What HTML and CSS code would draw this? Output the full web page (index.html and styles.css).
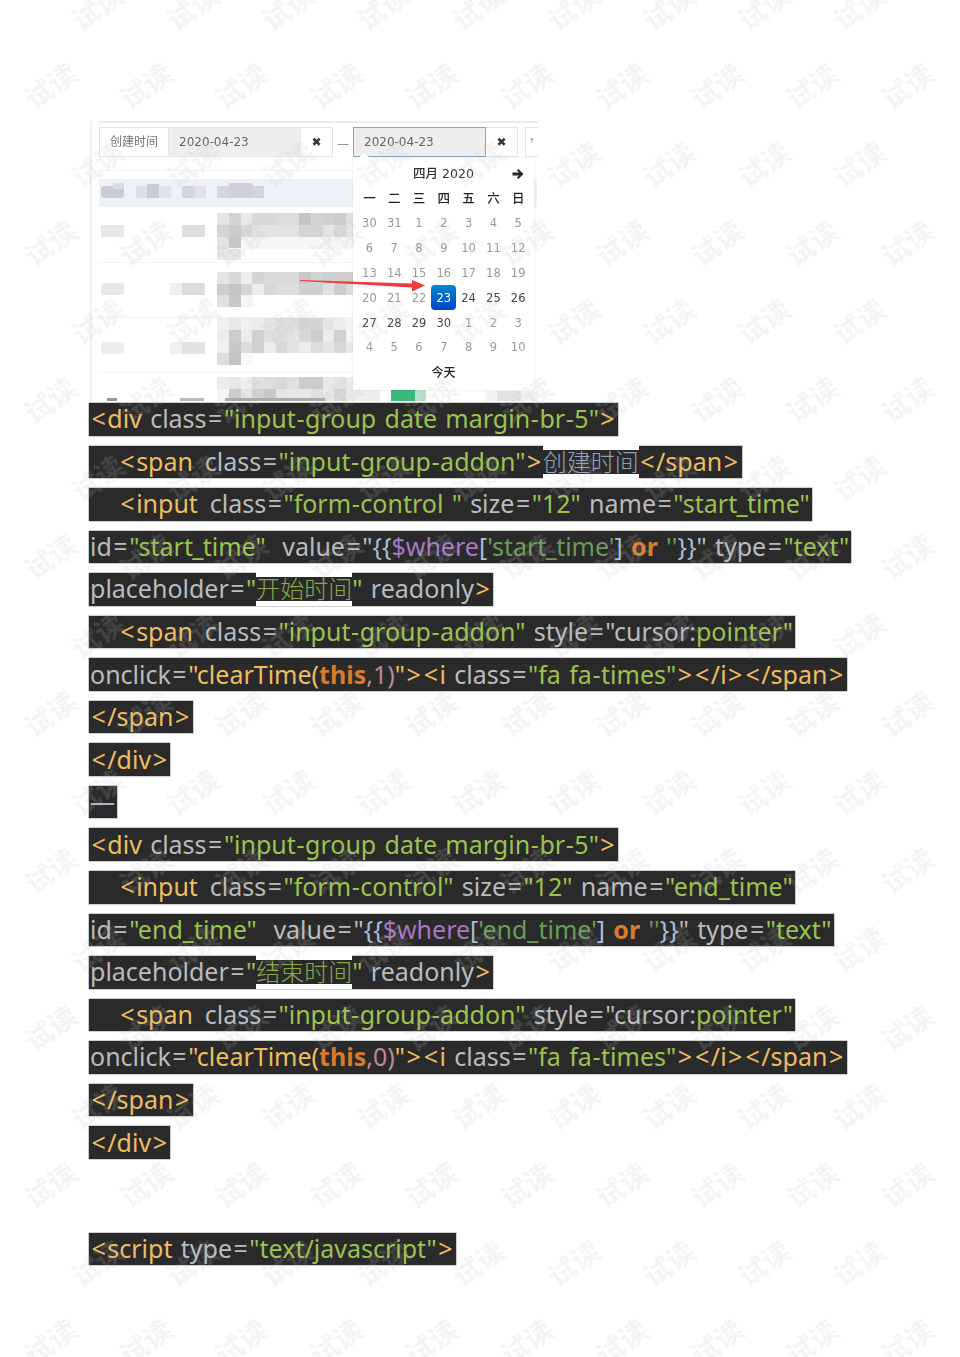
FILE: index.html
```html
<!DOCTYPE html>
<html lang="zh-CN">
<head>
<meta charset="utf-8">
<title>试读</title>
<link rel="stylesheet" href="styles.css">
</head>
<body>
<main class="page">
  <section class="shot">
    <div class="topline"></div>
    <div class="filters">
      <div class="group">
        <span class="addon label">创建时间</span>
        <span class="field">2020-04-23</span>
        <span class="addon clear">✖</span>
      </div>
      <span class="dash">—</span>
      <div class="group">
        <span class="field focus">2020-04-23</span>
        <span class="addon clear">✖</span>
      </div>
      <div class="stub">↑</div>
    </div>
    <svg class="table" viewBox="90 165 447 236" width="447" height="236" aria-hidden="true">
      <rect x="99" y="170" width="255" height="1" fill="#f3f3f3"/>
      <rect x="99" y="262" width="255" height="1" fill="#f4f4f4"/>
      <rect x="99" y="317" width="255" height="1" fill="#f4f4f4"/>
      <rect x="99" y="372" width="255" height="1" fill="#f4f4f4"/>
      <rect x="99" y="179" width="438" height="28" fill="#eef1f5"/>
      <g><rect x="101" y="186" width="23" height="12" rx="3" fill="#c9ccd2"/><rect x="113" y="183" width="11" height="6" fill="#d8dbe0"/><rect x="136" y="186" width="12" height="12" fill="#dcdfe4"/><rect x="147" y="184" width="12" height="14" fill="#c9ccd2"/><rect x="159" y="186" width="12" height="12" fill="#e0e3e8"/><rect x="182" y="186" width="12" height="12" fill="#d2d5da"/><rect x="194" y="186" width="12" height="12" fill="#dfe1e6"/><rect x="217" y="186" width="47" height="12" fill="#d4d6dc"/><rect x="229" y="183" width="24" height="15" fill="#cfd1d7"/></g>
      <g class="left"><rect x="101" y="225" width="23" height="12" fill="#e8e8e8"/><rect x="182" y="225" width="23" height="12" fill="#dedede"/><rect x="101" y="283" width="23" height="12" rx="3" fill="#e8e8e8"/><rect x="170" y="283" width="12" height="12" fill="#f0f0f0"/><rect x="182" y="283" width="23" height="12" fill="#dcdcdc"/><rect x="101" y="342" width="23" height="12" rx="3" fill="#ececec"/><rect x="170" y="342" width="12" height="12" fill="#f0f0f0"/><rect x="182" y="342" width="23" height="12" fill="#e2e2e2"/></g>
      <g>
        <rect x="217" y="213" width="12" height="12" fill="#e4e4e4"/><rect x="229" y="213" width="12" height="12" fill="#d4d4d4"/><rect x="241" y="213" width="12" height="12" fill="#e8e8e8"/><rect x="252" y="213" width="24" height="12" fill="#d8d8d8"/><rect x="276" y="213" width="23" height="12" fill="#dcdcdc"/><rect x="299" y="213" width="12" height="12" fill="#c4c4c4"/><rect x="311" y="213" width="12" height="12" fill="#d4d4d4"/><rect x="323" y="213" width="12" height="12" fill="#d0d0d0"/><rect x="334" y="213" width="12" height="12" fill="#cccccc"/><rect x="346" y="213" width="11" height="12" fill="#e0e0e0"/>
        <rect x="217" y="225" width="12" height="12" fill="#d4d4d4"/><rect x="229" y="225" width="12" height="12" fill="#cccccc"/><rect x="241" y="225" width="12" height="12" fill="#d8d8d8"/><rect x="252" y="225" width="24" height="12" fill="#e2e2e2"/><rect x="276" y="225" width="23" height="12" fill="#e2e2e2"/><rect x="299" y="225" width="24" height="12" fill="#d4d4d4"/><rect x="323" y="225" width="12" height="12" fill="#e4e4e4"/><rect x="334" y="225" width="12" height="12" fill="#d8d8d8"/><rect x="346" y="225" width="11" height="12" fill="#e8e8e8"/>
        <rect x="217" y="237" width="12" height="12" fill="#e4e4e4"/><rect x="229" y="237" width="12" height="11" fill="#c8c8c8"/><rect x="241" y="237" width="116" height="12" fill="#f6f6f6"/>
        <rect x="217" y="249" width="24" height="11" fill="#e8e8e8"/>
        <rect x="217" y="272" width="12" height="12" fill="#e4e4e4"/><rect x="229" y="272" width="12" height="12" fill="#d8d8d8"/><rect x="241" y="272" width="12" height="12" fill="#ececec"/><rect x="252" y="272" width="12" height="12" fill="#d4d4d4"/><rect x="264" y="272" width="35" height="12" fill="#dadada"/><rect x="299" y="272" width="12" height="12" fill="#c8c8c8"/><rect x="311" y="272" width="12" height="12" fill="#d4d4d4"/><rect x="323" y="272" width="34" height="12" fill="#cfcfcf"/>
        <rect x="217" y="284" width="12" height="11" fill="#cccccc"/><rect x="229" y="284" width="12" height="11" fill="#c4c4c4"/><rect x="241" y="284" width="12" height="11" fill="#d4d4d4"/><rect x="252" y="284" width="12" height="11" fill="#ececec"/><rect x="264" y="284" width="12" height="11" fill="#d8d8d8"/><rect x="276" y="284" width="23" height="11" fill="#dedede"/><rect x="299" y="284" width="24" height="11" fill="#d0d0d0"/><rect x="323" y="284" width="12" height="11" fill="#e0e0e0"/><rect x="334" y="284" width="12" height="11" fill="#cccccc"/><rect x="346" y="284" width="11" height="11" fill="#dcdcdc"/>
        <rect x="217" y="295" width="12" height="12" fill="#e0e0e0"/><rect x="229" y="295" width="12" height="12" fill="#c8c8c8"/><rect x="241" y="295" width="12" height="12" fill="#f4f4f4"/>
        <rect x="217" y="318" width="12" height="12" fill="#f0f0f0"/><rect x="229" y="318" width="12" height="12" fill="#e8e8e8"/><rect x="241" y="318" width="12" height="12" fill="#f0f0f0"/><rect x="252" y="318" width="12" height="12" fill="#ececec"/><rect x="264" y="318" width="12" height="12" fill="#e4e4e4"/><rect x="276" y="318" width="23" height="12" fill="#dedede"/><rect x="299" y="318" width="24" height="12" fill="#d4d4d4"/><rect x="323" y="318" width="12" height="12" fill="#e4e4e4"/><rect x="334" y="318" width="12" height="12" fill="#ececec"/><rect x="346" y="318" width="11" height="12" fill="#f4f4f4"/>
        <rect x="217" y="330" width="12" height="12" fill="#ececec"/><rect x="229" y="330" width="12" height="12" fill="#cccccc"/><rect x="241" y="330" width="12" height="12" fill="#ececec"/><rect x="252" y="330" width="12" height="12" fill="#d0d0d0"/><rect x="264" y="330" width="23" height="12" fill="#e0e0e0"/><rect x="287" y="330" width="12" height="12" fill="#e4e4e4"/><rect x="299" y="330" width="12" height="12" fill="#d8d8d8"/><rect x="311" y="330" width="12" height="12" fill="#cccccc"/><rect x="323" y="330" width="12" height="12" fill="#ececec"/><rect x="334" y="330" width="12" height="12" fill="#d0d0d0"/><rect x="346" y="330" width="11" height="12" fill="#f4f4f4"/>
        <rect x="217" y="342" width="12" height="11" fill="#f0f0f0"/><rect x="229" y="342" width="12" height="11" fill="#c8c8c8"/><rect x="241" y="342" width="12" height="11" fill="#dcdcdc"/><rect x="252" y="342" width="12" height="11" fill="#d0d0d0"/><rect x="264" y="342" width="12" height="11" fill="#ececec"/><rect x="276" y="342" width="12" height="11" fill="#d8d8d8"/><rect x="287" y="342" width="12" height="11" fill="#e4e4e4"/><rect x="299" y="342" width="12" height="11" fill="#ececec"/><rect x="311" y="342" width="12" height="11" fill="#dcdcdc"/><rect x="323" y="342" width="12" height="11" fill="#e4e4e4"/><rect x="334" y="342" width="12" height="11" fill="#d8d8d8"/><rect x="346" y="342" width="11" height="11" fill="#e8e8e8"/>
        <rect x="217" y="353" width="12" height="12" fill="#dcdcdc"/><rect x="229" y="353" width="12" height="12" fill="#c4c4c4"/><rect x="241" y="353" width="12" height="12" fill="#f8f8f8"/>
        <rect x="217" y="377" width="12" height="12" fill="#ececec"/><rect x="229" y="377" width="12" height="12" fill="#e8e8e8"/><rect x="241" y="377" width="12" height="12" fill="#f0f0f0"/><rect x="252" y="377" width="12" height="12" fill="#e0e0e0"/><rect x="264" y="377" width="12" height="12" fill="#dcdcdc"/><rect x="276" y="377" width="12" height="12" fill="#d8d8d8"/><rect x="287" y="377" width="12" height="12" fill="#e0e0e0"/><rect x="299" y="377" width="24" height="12" fill="#cccccc"/><rect x="323" y="377" width="12" height="12" fill="#e8e8e8"/><rect x="334" y="377" width="12" height="12" fill="#e4e4e4"/><rect x="346" y="377" width="11" height="12" fill="#f0f0f0"/>
        <rect x="217" y="389" width="12" height="12" fill="#f4f4f4"/><rect x="229" y="389" width="12" height="12" fill="#cccccc"/><rect x="241" y="389" width="12" height="12" fill="#e8e8e8"/><rect x="252" y="389" width="12" height="12" fill="#d4d4d4"/><rect x="264" y="389" width="12" height="12" fill="#c8c8c8"/><rect x="276" y="389" width="12" height="12" fill="#e4e4e4"/><rect x="287" y="389" width="24" height="12" fill="#e8e8e8"/><rect x="311" y="389" width="12" height="12" fill="#e0e0e0"/><rect x="323" y="389" width="12" height="12" fill="#e8e8e8"/><rect x="334" y="389" width="12" height="12" fill="#d8d8d8"/><rect x="346" y="389" width="34" height="12" fill="#eeeeee"/>
        <rect x="107" y="398" width="10" height="3" fill="#999999"/><rect x="180" y="398" width="24" height="3" fill="#bbbbbb"/><rect x="225" y="398" width="100" height="3" fill="#aaaaaa"/>
        <rect x="391" y="389" width="24" height="12" fill="#3db97c"/><rect x="415" y="390" width="11" height="11" fill="#b6e3cb"/><rect x="485" y="391" width="12" height="10" fill="#f2f2f2"/><rect x="497" y="391" width="24" height="10" fill="#e4e4e4"/><rect x="521" y="391" width="16" height="10" fill="#f0f0f0"/>
      </g>
    </svg>
    <div class="picker">
      <div class="caption"><span class="title">四月 2020</span><svg class="next" viewBox="0 0 13 10" width="13" height="10" aria-hidden="true"><path d="M0 3.6H6.6L4.4 1.4 5.8 0 11 5 5.8 10 4.4 8.6 6.6 6.4H0Z" transform="translate(1.5 0)" fill="#222"/></svg></div>
      <div class="days">
        <b>一</b><b>二</b><b>三</b><b>四</b><b>五</b><b>六</b><b>日</b>
        <i>30</i><i>31</i><i>1</i><i>2</i><i>3</i><i>4</i><i>5</i>
        <i>6</i><i>7</i><i>8</i><i>9</i><i>10</i><i>11</i><i>12</i>
        <i>13</i><i>14</i><i>15</i><i>16</i><i>17</i><i>18</i><i>19</i>
        <i>20</i><i>21</i><i>22</i><em class="today">23</em><em>24</em><em>25</em><em>26</em>
        <em>27</em><em>28</em><em>29</em><em>30</em><i>1</i><i>2</i><i>3</i>
        <i>4</i><i>5</i><i>6</i><i>7</i><i>8</i><i>9</i><i>10</i>
      </div>
      <div class="now">今天</div>
    </div>
    <svg class="arrow" viewBox="0 0 130 18" width="130" height="18" aria-hidden="true"><polygon points="1,4 113,7.5 113,4 126,9.5 113,15.6 113,11.5 1,5" fill="#f23a3c"/></svg>
  </section>

  <section class="code">
    <div class="line"><span class="bar"><span class="t"><i>&lt;</i>div</span><span class="a"> class<i>=</i></span><span class="s">"input<i class="n">-</i>group date margin<i class="n">-</i>br<i class="n">-</i>5"</span><span class="t"><i>&gt;</i></span></span></div>
    <div class="line"><span class="bar"><span class="t ind">    <i>&lt;</i>span</span><span class="a"> class<i>=</i></span><span class="s">"input<i class="n">-</i>group<i class="n">-</i>addon"</span><span class="t"><i>&gt;</i></span><span class="cjk pale">创建时间</span><span class="t"><i>&lt;</i>/span<i>&gt;</i></span></span></div>
    <div class="line"><span class="bar"><span class="t ind">    <i>&lt;</i>input</span><span class="a"> class<i>=</i></span><span class="s">"form<i class="n">-</i>control "</span><span class="a"> size<i>=</i></span><span class="s">"12"</span><span class="a"> name<i>=</i></span><span class="s">"start<i class="u">_</i>time"</span></span></div>
    <div class="line"><span class="bar"><span class="a">id<i>=</i></span><span class="s">"start<i class="u">_</i>time"</span><span class="a">  value<i>=</i>"</span><span class="b">{{</span><span class="v">$where</span><span class="b">[</span><span class="q">'start<i class="u">_</i>time'</span><span class="b">]</span><span class="k"> or </span><span class="q">''</span><span class="b">}}</span><span class="a">" type<i>=</i></span><span class="s">"text"</span></span></div>
    <div class="line"><span class="bar"><span class="a">placeholder<i>=</i></span><span class="s">"</span><span class="cjk green">开始时间</span><span class="s">"</span><span class="a"> readonly</span><span class="t"><i>&gt;</i></span></span></div>
    <div class="line"><span class="bar"><span class="t ind">    <i>&lt;</i>span</span><span class="a"> class<i>=</i></span><span class="s">"input<i class="n">-</i>group<i class="n">-</i>addon"</span><span class="a"> style<i>=</i>"cursor:</span><span class="s">pointer"</span></span></div>
    <div class="line"><span class="bar"><span class="a">onclick<i>=</i></span><span class="t">"clearTime(</span><span class="k">this</span><span class="m">,1)</span><span class="t">"<i>&gt;</i><i>&lt;</i>i</span><span class="a"> class<i>=</i></span><span class="s">"fa fa<i class="n">-</i>times"</span><span class="t"><i>&gt;</i><i>&lt;</i>/i<i>&gt;</i><i>&lt;</i>/span<i>&gt;</i></span></span></div>
    <div class="line"><span class="bar"><span class="t"><i>&lt;</i>/span<i>&gt;</i></span></span></div>
    <div class="line"><span class="bar"><span class="t"><i>&lt;</i>/div<i>&gt;</i></span></span></div>
    <div class="line"><span class="bar"><span class="rule">—</span></span></div>
    <div class="line"><span class="bar"><span class="t"><i>&lt;</i>div</span><span class="a"> class<i>=</i></span><span class="s">"input<i class="n">-</i>group date margin<i class="n">-</i>br<i class="n">-</i>5"</span><span class="t"><i>&gt;</i></span></span></div>
    <div class="line"><span class="bar"><span class="t ind">    <i>&lt;</i>input</span><span class="a"> class<i>=</i></span><span class="s">"form<i class="n">-</i>control"</span><span class="a"> size<i>=</i></span><span class="s">"12"</span><span class="a"> name<i>=</i></span><span class="s">"end_time"</span></span></div>
    <div class="line"><span class="bar"><span class="a">id<i>=</i></span><span class="s">"end_time"</span><span class="a">  value<i>=</i>"</span><span class="b">{{</span><span class="v">$where</span><span class="b">[</span><span class="q">'end_time'</span><span class="b">]</span><span class="k"> or </span><span class="q">''</span><span class="b">}}</span><span class="a">" type<i>=</i></span><span class="s">"text"</span></span></div>
    <div class="line"><span class="bar"><span class="a">placeholder<i>=</i></span><span class="s">"</span><span class="cjk green">结束时间</span><span class="s">"</span><span class="a"> readonly</span><span class="t"><i>&gt;</i></span></span></div>
    <div class="line"><span class="bar"><span class="t ind">    <i>&lt;</i>span</span><span class="a"> class<i>=</i></span><span class="s">"input<i class="n">-</i>group<i class="n">-</i>addon"</span><span class="a"> style<i>=</i>"cursor:</span><span class="s">pointer"</span></span></div>
    <div class="line"><span class="bar"><span class="a">onclick<i>=</i></span><span class="t">"clearTime(</span><span class="k">this</span><span class="m">,0)</span><span class="t">"<i>&gt;</i><i>&lt;</i>i</span><span class="a"> class<i>=</i></span><span class="s">"fa fa<i class="n">-</i>times"</span><span class="t"><i>&gt;</i><i>&lt;</i>/i<i>&gt;</i><i>&lt;</i>/span<i>&gt;</i></span></span></div>
    <div class="line"><span class="bar"><span class="t"><i>&lt;</i>/span<i>&gt;</i></span></span></div>
    <div class="line"><span class="bar"><span class="t"><i>&lt;</i>/div<i>&gt;</i></span></span></div>
    <div class="line script"><span class="bar"><span class="t"><i>&lt;</i>script</span><span class="a"> type<i>=</i></span><span class="s">"text/javascript"</span><span class="t"><i>&gt;</i></span></span></div>
  </section>
</main>

<svg class="watermark" width="960" height="1357" aria-hidden="true">
  <defs>
    <pattern id="wm-a" x="50.4" y="-70.5" width="95.2" height="157" patternUnits="userSpaceOnUse">
      <text class="wm-text" transform="translate(47.6 78.5) rotate(-35)" text-anchor="middle" y="10">试读</text>
    </pattern>
    <pattern id="wm-b" x="3.4" y="8" width="95.2" height="157" patternUnits="userSpaceOnUse">
      <text class="wm-text" transform="translate(47.6 78.5) rotate(-35)" text-anchor="middle" y="10">试读</text>
    </pattern>
  </defs>
  <rect x="68" width="824" height="1357" fill="url(#wm-a)"/>
  <rect x="20" width="920" height="1357" fill="url(#wm-b)"/>
</svg>
</body>
</html>
```

FILE: styles.css
```css
* { box-sizing: border-box; }
html, body { margin: 0; padding: 0; background: #fff; }
body { width: 960px; height: 1357px; overflow: hidden; position: relative; }

.page { padding: 121px 0 0 89px; }

/* pasted screenshot */
.shot {
  position: relative;
  width: 448px;
  height: 280px;
  margin-left: 1px;
  overflow: hidden;
  filter: blur(0.45px);
  box-shadow: inset 1.5px 0 0 #eceef2;
  font-family: "DejaVu Sans", "Noto Sans CJK SC", sans-serif;
  font-size: 12px;
  color: #666;
}
.topline { height: 2px; margin-left: 9px; background: #e9ebf0; }
.filters {
  display: flex;
  align-items: center;
  height: 42px;
  padding: 4px 0 8px 9px;
}
.group { display: flex; height: 30px; border: 1px solid #e3e5ea; }
.addon, .field { display: flex; align-items: center; }
.label { width: 69px; justify-content: center; padding-bottom: 3px; border-right: 1px solid #e3e5ea; color: #777; font-size: 12px; font-family: "Noto Sans CJK SC", sans-serif; }
.field { width: 132px; padding-left: 10px; background: #eee; }
.field.focus { margin: -1px 0 -1px -1px; height: 30px; border: 1px solid #7fabc9; width: 133px; }
.clear { width: 31px; justify-content: center; color: #333; font-size: 12px; }
.dash { width: 20px; padding-top: 3px; text-align: center; color: #888; }
.stub { margin-left: 7px; width: 13px; height: 30px; border: 1px solid #e3e5ea; border-right: 0; font-size: 7px; line-height: 26px; text-align: center; color: #777; }
.table { display: block; }

.picker {
  position: absolute;
  left: 263px;
  top: 37px;
  width: 181px;
  height: 232px;
  padding: 3px 4px;
  background: #fff;
  box-shadow: 0 0 2px rgba(0,0,0,.12);
}
.picker::before {
  content: "";
  position: absolute;
  left: 7px;
  top: -4px;
  width: 8px;
  height: 8px;
  background: #fff;
  transform: rotate(45deg);
  box-shadow: -1px -1px 1px rgba(0,0,0,.05);
}
.caption { position: relative; height: 25px; line-height: 25px; text-align: center; color: #333; font-size: 12.5px; font-weight: 500; }
.next { position: absolute; right: 6px; top: 8px; }
.days { display: grid; grid-template-columns: repeat(7, 24.8px); grid-auto-rows: 24.85px; }
.days b, .days i, .days em {
  display: flex;
  align-items: center;
  justify-content: center;
  font-style: normal;
  font-weight: 400;
  font-size: 11.5px;
}
.days b { padding-bottom: 2px; color: #222; font-family: "Noto Sans CJK SC", sans-serif; font-size: 12.5px; font-weight: 500; }
.days i { color: #999; }
.days em { color: #444; }
.days em.today {
  color: #fff;
  border-radius: 4px;
  background: linear-gradient(#08c, #04c);
}
.now { height: 25px; line-height: 23px; text-align: center; color: #222; font-family: "Noto Sans CJK SC", sans-serif; font-size: 12px; font-weight: 500; }
.arrow { position: absolute; left: 209px; top: 155px; }

/* code listing */
.code {
  margin-top: 2px;
  font-family: "Noto Sans", "Noto Sans CJK SC", sans-serif;
  font-size: 25px;
  word-spacing: 1.8px;
}
.line { display: flex; align-items: flex-start; height: 42.55px; }
.line.script { margin-top: 63.8px; }
.bar {
  display: inline-flex;
  align-items: center;
  height: 32.5px;
  padding: 0 2px 1px 1px;
  line-height: 31px;
  white-space: pre;
  background: #2a2a2a;
  box-shadow: 0 0 0 .5px #9a9a9a;
}
.bar i { font-style: normal; margin: 0 1.5px; }
.bar i.n { margin: 0 .6px; }
.bar i.u { margin: 0 -.7px; }
.ind { word-spacing: .7px; padding-right: 3.5px; }
.cjk {
  height: 24px;
  margin-top: 1px;
  line-height: 24px;
  font-size: 24px;
  font-weight: 300;
  background: #2a2a2a;
  box-shadow: 0 -5px 0 #fff, 0 5px 0 #fff;
}
.t { color: #edbe62; }
.a { color: #b9bcbe; }
.s { color: #9ac350; }
.b { color: #a6bdd6; }
.v { color: #a678c4; }
.q { color: #6b9a5c; }
.k { color: #d97b2b; font-weight: 700; }
.m { color: #b98a94; }
.pale { color: #8fa2b8; }
.green { color: #8aa84a; }
.rule { color: #a8b8c8; }

/* preview watermark over the whole page */
.watermark { position: absolute; left: 0; top: 0; pointer-events: none; }
.wm-text { font-family: "Noto Sans CJK SC", sans-serif; font-size: 28px; font-weight: 700; fill: rgba(190, 190, 190, .17); }
```
